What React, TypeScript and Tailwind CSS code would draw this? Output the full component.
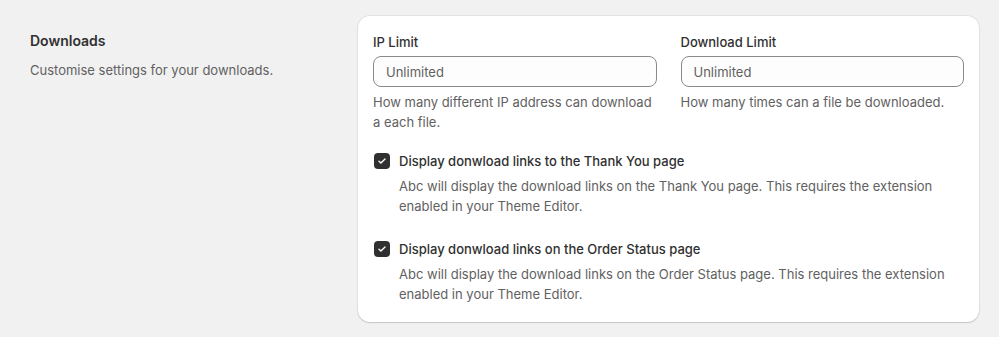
import React from "react";

function Check() {
  return (
    <span className="mt-[2px] flex h-4 w-4 shrink-0 items-center justify-center rounded-[4px] bg-[#303030]">
      <svg viewBox="0 0 16 16" className="h-3 w-3" fill="none">
        <path
          d="M4 8.3l2.6 2.5L12 5.4"
          stroke="#fff"
          strokeWidth="1.8"
          strokeLinecap="round"
          strokeLinejoin="round"
        />
      </svg>
    </span>
  );
}

function Field({ label, help }: { label: string; help: string }) {
  return (
    <div>
      <p className="text-[13px] leading-5 font-medium text-[#303030]">{label}</p>
      <input
        readOnly
        placeholder="Unlimited"
        className="mt-1 h-[31px] w-full rounded-lg border border-[#8a8a8a] bg-[#fdfdfd] px-3 text-[13px] text-[#303030] placeholder:text-[#616161] outline-none"
      />
      <p className="mt-[5px] text-[13px] leading-5 text-[#616161]">{help}</p>
    </div>
  );
}

function Option({ title, text }: { title: string; text: string }) {
  return (
    <label className="flex gap-2 pl-[1px]">
      <Check />
      <div className="pl-[1px]">
        <p className="text-[13px] leading-5 font-medium text-[#303030]">{title}</p>
        <p className="mt-[5px] text-[13px] leading-5 text-[#616161]">{text}</p>
      </div>
    </label>
  );
}

export default function App() {
  return (
    <div
      className="h-[337px] w-full bg-[#f1f1f1]"
      style={{ fontFamily: "Inter, 'Noto Sans', sans-serif" }}
    >
      <div className="flex pt-4 pl-[30px]">
        <div className="w-[328px] pt-[15px]">
          <h2 className="text-sm leading-5 font-semibold text-[#303030]">Downloads</h2>
          <p className="mt-[9px] text-[13px] leading-5 text-[#616161]">
            Customise settings for your downloads.
          </p>
        </div>
        <div className="w-[621px] rounded-xl bg-white px-[15px] pt-4 pb-[18px] shadow-[0_1px_0_0_rgba(26,26,26,0.07),0_0_0_1px_rgba(0,0,0,0.05),0_1px_2px_rgba(0,0,0,0.08)]">
          <div className="grid grid-cols-2 gap-6">
            <Field
              label="IP Limit"
              help="How many different IP address can download a each file."
            />
            <Field label="Download Limit" help="How many times can a file be downloaded." />
          </div>
          <div className="mt-[19px] flex flex-col gap-[23px]">
            <Option
              title="Display donwload links to the Thank You page"
              text="Abc will display the download links on the Thank You page. This requires the extension enabled in your Theme Editor."
            />
            <Option
              title="Display donwload links on the Order Status page"
              text="Abc will display the download links on the Order Status page. This requires the extension enabled in your Theme Editor."
            />
          </div>
        </div>
      </div>
    </div>
  );
}
